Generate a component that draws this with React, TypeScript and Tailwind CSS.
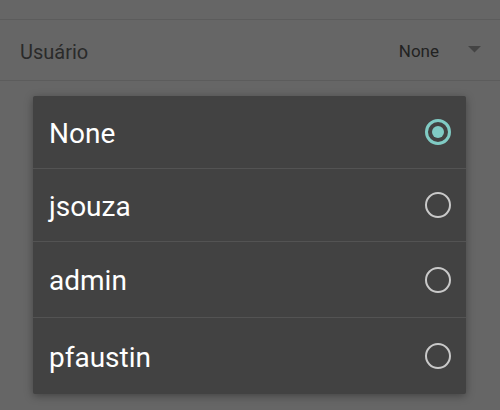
import React from "react";

const items = [
  { label: "None", h: "h-[72px]", selected: true },
  { label: "jsouza", h: "h-[73px]", selected: false },
  { label: "admin", h: "h-[76px]", selected: false },
  { label: "pfaustin", h: "h-[77px]", selected: false },
];

function Radio({ selected }: { selected: boolean }) {
  return selected ? (
    <div className="w-[26px] h-[26px] rounded-full border-[3px] border-[#80cbc4] flex items-center justify-center">
      <div className="w-[12px] h-[12px] rounded-full bg-[#80cbc4]" />
    </div>
  ) : (
    <div className="w-[26px] h-[26px] rounded-full border-[2.5px] border-[#c9c9c9]" />
  );
}

export default function App() {
  return (
    <div
      className="relative w-[500px] h-[410px] bg-[#666666] overflow-hidden"
      style={{ fontFamily: "Roboto, 'Noto Sans', sans-serif" }}
    >
      <div className="h-[19px]" />
      <div className="h-[62px] border-y border-[#5c5c5c] flex items-center pl-[20px] pr-[19px]">
        <span className="text-[20px] text-[#2a2a2a] flex-1 leading-none mt-[3px]">Usuário</span>
        <span className="text-[17px] text-[#222222] leading-none mt-[2px]">None</span>
        <svg width="13" height="7" viewBox="0 0 13 7" className="ml-[29px] mt-[-2px]">
          <path d="M0 0 H13 L6.5 6.5 Z" fill="#444444" />
        </svg>
      </div>
      <div className="absolute left-[33px] top-[96px] w-[433px] h-[298px] bg-[#424242] rounded-[2px] shadow-[0_2px_8px_rgba(0,0,0,0.35)] flex flex-col overflow-hidden">
        {items.map((it, i) => (
          <div
            key={it.label}
            className={`${it.h} flex items-center pl-[16px] pr-[15px] ${i > 0 ? "border-t border-[#535353]" : ""}`}
          >
            <span className="flex-1 text-[28px] text-white leading-none mt-[3px]">{it.label}</span>
            <Radio selected={it.selected} />
          </div>
        ))}
      </div>
    </div>
  );
}
